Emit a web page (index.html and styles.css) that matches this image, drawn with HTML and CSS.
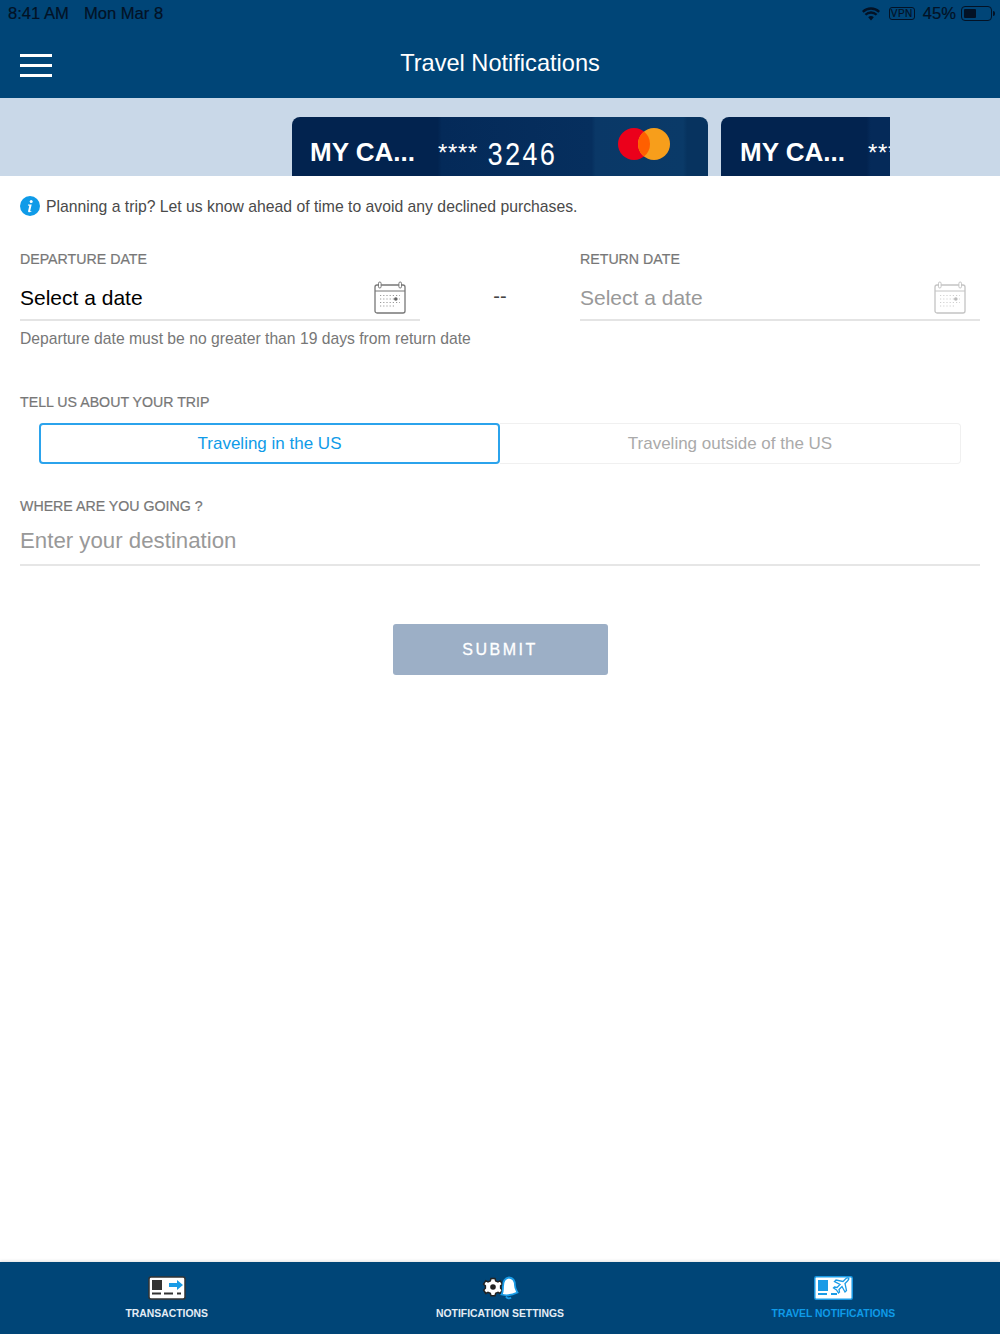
FILE: index.html
```html
<!DOCTYPE html>
<html lang="en">
<head>
	<meta charset="UTF-8">
	<meta name="viewport" content="width=device-width, initial-scale=1.0">
	<title>Travel Notifications</title>
	<link rel="stylesheet" href="styles.css">
</head>
<body>
<div class="page">
	<header class="top">
		<div class="status-bar">
			<div class="status-left"><span>8:41 AM</span><span>Mon Mar 8</span></div>
			<div class="status-right">
				<svg class="wifi" width="18" height="14" viewBox="0 0 18 14">
					<path d="M9 13.500 6.200 10.200a3.900 3.900 0 0 1 5.600 0z" fill="#031225"/>
					<path d="M.8 4.800a11.800 11.800 0 0 1 16.400 0M3.400 7.800a8 8 0 0 1 11.200 0" fill="none" stroke="#031225" stroke-width="2.300"/>
				</svg>
				<span class="vpn">VPN</span>
				<span class="batt-text">45%</span>
				<span class="battery"><span class="battery-fill"></span></span>
				<span class="battery-tip"></span>
			</div>
		</div>
		<div class="title-bar">
			<div class="menu-btn"><span></span><span></span><span></span></div>
			<h1>Travel Notifications</h1>
		</div>
	</header>

	<div class="card-strip">
		<div class="carousel">
			<div class="card card-main">
				<span class="card-name">MY CA...</span>
				<span class="card-stars">****</span>
				<span class="card-digits">3246</span>
				<svg class="mc-logo" width="52" height="34" viewBox="0 0 52 34">
					<circle cx="16" cy="17" r="16" fill="#eb001b"/>
					<circle cx="36" cy="17" r="16" fill="#f79e1b"/>
					<path d="M26 4.500A16 16 0 0 1 26 29.500A16 16 0 0 1 26 4.500z" fill="#ff5f00"/>
				</svg>
			</div>
			<div class="card card-next">
				<span class="card-name">MY CA...</span>
				<span class="card-stars">****</span>
			</div>
		</div>
	</div>

	<main class="content">
		<div class="notice">
			<svg width="20" height="20" viewBox="0 0 20 20">
				<circle cx="10" cy="10" r="10" fill="#0f9be8"/>
				<circle cx="11.200" cy="5.400" r="1.500" fill="#fff"/>
				<path d="M8 8.500h3.700l-1.500 6.200c-.1.500.3.600 1.300.2l-.2.900c-1.300.7-3.500.9-3.200-.8l1.200-5.200-1.400-.3z" fill="#fff"/>
			</svg>
			<p>Planning a trip? Let us know ahead of time to avoid any declined purchases.</p>
		</div>

		<div class="dates">
			<div class="date-col">
				<label class="field-label">DEPARTURE DATE</label>
				<div class="date-input">
					<span class="date-text">Select a date</span>
					<svg class="cal" width="32" height="33" viewBox="0 0 32 33" fill="none" stroke="#777">
						<rect x="1" y="4" width="30" height="28" rx="2" stroke-width="1.300"/>
						<path d="M1 10h30" stroke-width="1"/>
						<rect x="4.500" y="1" width="2.600" height="6" rx="1.300" fill="#fff" stroke-width="1"/>
						<rect x="24.900" y="1" width="2.600" height="6" rx="1.300" fill="#fff" stroke-width="1"/>
						<path d="M6 14.500h20M6 18h20M6 21.500h20M6 25h14" stroke-width="1.200" stroke-dasharray="1.200 2" stroke="#999"/>
						<circle cx="21.800" cy="18" r="1.800" fill="#666" stroke="none"/>
					</svg>
				</div>
				<p class="hint">Departure date must be no greater than 19 days from return date</p>
			</div>
			<div class="dash">--</div>
			<div class="date-col">
				<label class="field-label">RETURN DATE</label>
				<div class="date-input is-disabled">
					<span class="date-text">Select a date</span>
					<svg class="cal" width="32" height="33" viewBox="0 0 32 33" fill="none" stroke="#c4c4c4">
						<rect x="1" y="4" width="30" height="28" rx="2" stroke-width="1.300"/>
						<path d="M1 10h30" stroke-width="1"/>
						<rect x="4.500" y="1" width="2.600" height="6" rx="1.300" fill="#fff" stroke-width="1"/>
						<rect x="24.900" y="1" width="2.600" height="6" rx="1.300" fill="#fff" stroke-width="1"/>
						<path d="M6 14.500h20M6 18h20M6 21.500h20M6 25h14" stroke-width="1.200" stroke-dasharray="1.200 2" stroke="#d0d0d0"/>
						<circle cx="21.800" cy="18" r="1.800" fill="#bbb" stroke="none"/>
					</svg>
				</div>
			</div>
		</div>

		<label class="field-label trip-label">TELL US ABOUT YOUR TRIP</label>
		<div class="segments">
			<div class="segment active">Traveling in the US</div>
			<div class="segment">Traveling outside of the US</div>
		</div>

		<label class="field-label where-label">WHERE ARE YOU GOING ?</label>
		<div class="dest-input">Enter your destination</div>

		<div class="submit-wrap">
			<button class="submit" type="button">SUBMIT</button>
		</div>
	</main>

	<nav class="tabs">
		<div class="tab">
			<svg width="38" height="24" viewBox="0 0 38 24">
				<rect x="1" y="1" width="36" height="22" rx="2" fill="#fff" stroke="#333" stroke-width="1.500"/>
				<rect x="4" y="4" width="10" height="10" fill="#333"/>
				<path d="M21 7h8V4l6 5-6 5v-3h-8z" fill="#1a9be6"/>
				<path d="M4 17.500h9M16 17.500h9M29 17.500h4" stroke="#333" stroke-width="2"/>
			</svg>
			<span>TRANSACTIONS</span>
		</div>
		<div class="tab">
			<svg width="38" height="24" viewBox="0 0 38 24">
				<path d="M10 2.500h4l.7 2.400 2.300 1 2.200-1.200 2.200 3.500-1.800 1.700v2.400l1.800 1.700-2.200 3.500-2.200-1.200-2.300 1-.7 2.400h-4l-.7-2.400-2.300-1-2.200 1.200-2.200-3.500 1.800-1.700V9.900L2.600 8.200l2.200-3.500L7 5.900l2.300-1z" fill="#fff" stroke="#222" stroke-width="1.500"/>
				<circle cx="12" cy="11" r="2.800" fill="#222"/>
				<path d="M28 1.500c4.500.5 6 4 6 8 0 3 1.500 5 2.500 7-4 2-11 3.500-16 2 1.500-2 1.500-5 1.500-8 0-4.500 2-8.500 6-9z" fill="#fff" stroke="#1a9be6" stroke-width="1.800"/>
				<path d="M25 20.500c1 2 3.500 2.500 5 1" fill="none" stroke="#1a9be6" stroke-width="1.800"/>
			</svg>
			<span>NOTIFICATION SETTINGS</span>
		</div>
		<div class="tab tab-active">
			<svg width="39" height="24" viewBox="0 0 39 24">
				<rect x=".8" y=".8" width="37.400" height="22.400" rx="1.500" fill="#fff" stroke="#1a9be6" stroke-width="1.500"/>
				<rect x="4" y="4" width="10" height="11" fill="#1a9be6"/>
				<path d="M4 18h9M17 18h6" stroke="#1a9be6" stroke-width="2"/>
				<path d="M35 2.500c-1-1-2.500-.5-3.500.5l-2.500 2.500-7-1.500-1.500 1.500 5.500 3-3 3-2.500-.5-1 1 3 2 2 3 1-1-.5-2.500 3-3 3 5.500 1.500-1.500-1.500-7 2.500-2.500c1-1 1.500-2.500 1-3z" fill="#fff" stroke="#1a9be6" stroke-width="1.300"/>
			</svg>
			<span>TRAVEL NOTIFICATIONS</span>
		</div>
	</nav>
</div>
</body>
</html>
```
FILE: styles.css
```css
* {
	box-sizing: border-box;
}

body {
	margin: 0;
	font-family: "Liberation Sans", Arial, sans-serif;
	background: #fff;
}

.page {
	display: flex;
	flex-direction: column;
	height: 1334px;
	overflow: hidden;
}

/* Header */
.top {
	background: #004577;
	height: 98px;
	flex: none;
}

.status-bar {
	display: flex;
	justify-content: space-between;
	align-items: center;
	height: 28px;
	padding: 0 5px 1px 8px;
	color: #031225;
	font-size: 16.600px;
	-webkit-text-stroke: 0.2px #031225;
}

.status-left {
	display: flex;
	gap: 15px;
}

.status-right {
	display: flex;
	align-items: center;
}

.vpn {
	border: 1px solid #031225;
	border-radius: 3px;
	font-size: 10px;
	line-height: 11px;
	height: 13px;
	width: 26px;
	text-align: center;
	margin-left: 9px;
	letter-spacing: 0.5px;
}

.batt-text {
	margin-left: 8px;
}

.battery {
	display: block;
	width: 31px;
	height: 15px;
	border: 1px solid #031225;
	border-radius: 4px;
	padding: 2px;
	margin-left: 5px;
}

.battery-fill {
	display: block;
	width: 12px;
	height: 100%;
	background: #031225;
	border-radius: 1px;
}

.battery-tip {
	width: 2px;
	height: 5px;
	background: #031225;
	border-radius: 0 2px 2px 0;
	margin-left: 1px;
}

.title-bar {
	display: flex;
	align-items: center;
	justify-content: center;
	height: 70px;
	position: relative;
}

.title-bar h1 {
	margin: 0;
	font-size: 23.600px;
	font-weight: normal;
	color: #fff;
}

.menu-btn {
	position: absolute;
	left: 20px;
	top: 26px;
	width: 32px;
	display: flex;
	flex-direction: column;
	gap: 7px;
}

.menu-btn span {
	display: block;
	height: 3px;
	background: #fff;
}

/* Cards */
.card-strip {
	background: #c9d8e8;
	height: 78px;
	flex: none;
	padding: 19px 0 0 292px;
	overflow: hidden;
}

.carousel {
	display: flex;
	gap: 13px;
	width: 598px;
	overflow: hidden;
}

.card {
	flex: none;
	display: flex;
	align-items: flex-start;
	height: 80px;
	padding-top: 21px;
	padding-left: 18px;
	border-radius: 8px 8px 0 0;
	color: #fff;
	position: relative;
}

.card-main {
	width: 416px;
	background: linear-gradient(90deg, #02234f 0, #02234f 35%, #042a59 36%, #062f5e 72%, #0a3867 73%, #0a3a68 94%, #07335f 95%);
}

.card-next {
	width: 416px;
	padding-left: 19px;
	background: linear-gradient(90deg, #02234f 0, #02234f 35%, #052a59 36%);
}

.card-name {
	font-size: 26px;
	line-height: 28px;
	font-weight: bold;
	width: 128px;
	white-space: nowrap;
}

.card-stars {
	font-size: 24px;
	line-height: 30px;
	width: 49px;
	letter-spacing: 0.7px;
}

.card-digits {
	display: inline-block;
	font-family: "Liberation Mono", monospace;
	font-size: 27px;
	line-height: 32px;
	letter-spacing: 1.200px;
	transform: scaleY(1.200);
	transform-origin: top;
	margin-top: -1px;
}

.mc-logo {
	position: absolute;
	left: 326px;
	top: 10px;
}

/* Form */
.content {
	flex: 1;
	padding: 0 20px;
}

.notice {
	display: flex;
	align-items: center;
	gap: 6px;
	margin-top: 20px;
	height: 20px;
}

.notice p {
	margin: 2px 0 0;
	font-size: 15.750px;
	color: #4a4a4a;
}

.field-label {
	display: block;
	font-size: 14.200px;
	line-height: 16px;
	color: #777;
	-webkit-text-stroke: 0.2px #777;
}

.dates {
	display: flex;
	margin-top: 35px;
}

.date-col {
	width: 400px;
	flex: none;
}

.date-input {
	display: flex;
	justify-content: space-between;
	align-items: center;
	height: 52px;
	margin-top: 2px;
	padding: 6px 14px 0 0;
	border-bottom: 2px solid #e4e4e4;
	font-size: 21px;
	color: #000;
}

.date-text {
	padding-top: 2px;
}

.date-input.is-disabled {
	color: #999;
}

.hint {
	margin: 9px 0 0;
	font-size: 15.700px;
	line-height: 18px;
	color: #777;
	white-space: nowrap;
}

.dash {
	width: 160px;
	flex: none;
	text-align: center;
	color: #444;
	font-size: 20px;
	padding-top: 34px;
}

.trip-label {
	margin-top: 46px;
}

.segments {
	display: flex;
	margin: 13px 19px 0;
	height: 41px;
}

.segment {
	width: 50%;
	flex: none;
	display: flex;
	align-items: center;
	justify-content: center;
	padding-top: 1px;
	font-size: 17px;
	color: #aaa;
	border: 1px solid #f0f0f0;
	border-left: none;
	border-radius: 0 4px 4px 0;
}

.segment.active {
	color: #0f9be8;
	border: 2px solid #2ba3ec;
	border-radius: 4px;
}

.where-label {
	margin-top: 34px;
}

.dest-input {
	height: 49px;
	margin-top: 3px;
	padding-top: 10px;
	border-bottom: 2px solid #e6e6e6;
	font-size: 22.250px;
	line-height: 28px;
	color: #999;
}

.submit-wrap {
	display: flex;
	justify-content: center;
	margin-top: 58px;
}

.submit {
	width: 215px;
	height: 51px;
	border: none;
	border-radius: 3px;
	background: #9cafc6;
	color: #fff;
	font-family: inherit;
	font-size: 16px;
	letter-spacing: 2.500px;
	-webkit-text-stroke: 0.3px #fff;
}

/* Bottom tabs */
.tabs {
	flex: none;
	display: grid;
	grid-template-columns: repeat(3, 1fr);
	height: 72px;
	background: #004577;
	box-shadow: 0 -1px 3px rgba(0, 0, 0, 0.12);
}

.tab {
	display: flex;
	flex-direction: column;
	align-items: center;
	padding-top: 14px;
	color: #e4edf5;
	font-size: 10.400px;
	font-weight: bold;
}

.tab span {
	margin-top: 7px;
	line-height: 13px;
}

.tab-active {
	color: #0f9be8;
}
```
